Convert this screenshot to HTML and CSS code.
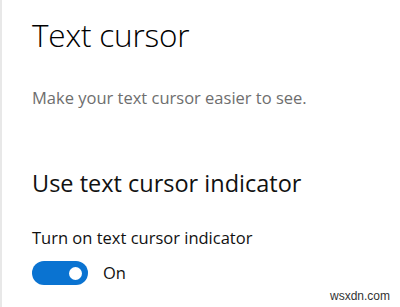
FILE: index.html
```html
<!DOCTYPE html>
<html>
<head>
<meta charset="utf-8">
<link rel="stylesheet" href="styles.css">
</head>
<body>
<div class="page">
  <h1 class="title">Text cursor</h1>
  <p class="subtitle">Make your text cursor easier to see.</p>
  <h2 class="heading">Use text cursor indicator</h2>
  <p class="label">Turn on text cursor indicator</p>
  <div class="toggle-row">
    <span class="toggle"><span class="knob"></span></span>
    <span class="state">On</span>
  </div>
  <div class="watermark">wsxdn.com</div>
</div>
</body>
</html>
```
FILE: styles.css
```css
html, body {
  margin: 0;
  padding: 0;
  background: #fff;
}
.page {
  width: 400px;
  height: 307px;
  box-sizing: border-box;
  border-left: 2px solid #e8e8e8;
  padding-left: 30px;
  position: relative;
  font-family: "Open Sans", "Noto Sans", sans-serif;
  color: #000;
}
.title {
  margin: 0;
  padding-top: 15px;
  font-size: 31.5px;
  font-weight: 300;
  line-height: 40px;
  letter-spacing: -0.2px;
}
.subtitle {
  margin: 0;
  margin-top: 32px;
  font-size: 16.5px;
  line-height: 22px;
  color: #6e6e6e;
}
.heading {
  margin: 0;
  margin-top: 59px;
  font-size: 23.5px;
  font-weight: 400;
  line-height: 30px;
  color: #111;
}
.label {
  margin: 0;
  margin-top: 29px;
  font-size: 16.5px;
  line-height: 22px;
  color: #111;
}
.toggle-row {
  display: flex;
  align-items: center;
  margin-top: 12px;
  gap: 15px;
}
.toggle {
  display: flex;
  align-items: center;
  justify-content: flex-end;
  width: 56px;
  height: 24px;
  border-radius: 12px;
  background: #0a73d1;
  box-sizing: border-box;
  padding-right: 6px;
}
.knob {
  width: 13px;
  height: 13px;
  border-radius: 50%;
  background: #fff;
}
.state {
  font-size: 16.5px;
  line-height: 22px;
  color: #111;
}
.watermark {
  position: absolute;
  right: 10px;
  bottom: 4px;
  font-family: "Liberation Sans", sans-serif;
  font-size: 12px;
  color: #333;
}
```
